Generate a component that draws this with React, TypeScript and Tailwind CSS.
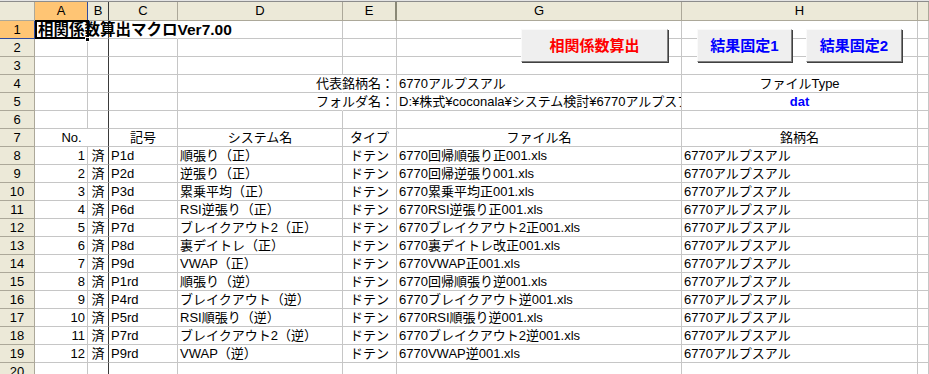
import React from 'react';

type Align = 'l' | 'c' | 'r';
type Edge = 'grid' | 'none' | 'freeze';

const alignCls: Record<Align, string> = {
  l: 'justify-start pl-[2px]',
  c: 'justify-center',
  r: 'justify-end pr-[2px]',
};

const edgeCls: Record<Edge, string> = {
  grid: 'border-r-[#c6c6c6]',
  none: 'border-r-transparent',
  freeze: 'border-r-[#3a3a3a]',
};

interface CellProps {
  children?: React.ReactNode;
  align?: Align;
  edge?: Edge;
  className?: string;
}

const Cell: React.FC<CellProps> = ({ children, align = 'l', edge = 'grid', className = '' }) => (
  <div
    className={`relative flex items-center whitespace-nowrap border-r border-b border-b-[#c6c6c6] text-[13px] leading-[17px] text-black ${alignCls[align]} ${edgeCls[edge]} ${className}`}
  >
    {children}
  </div>
);

const RowHead: React.FC<{ n: number; sel?: boolean }> = ({ n, sel }) => (
  <div
    className={
      sel
        ? 'flex items-center justify-center bg-[#ffc574] border-r border-b border-[#2f4ba0] text-[13px] leading-[17px]'
        : 'flex items-center justify-center bg-[#ece9d8] border-r border-b border-[#aca899] text-[13px] leading-[17px]'
    }
  >
    {n}
  </div>
);

const HeadCell: React.FC<{ label?: string; className?: string }> = ({ label, className = '' }) => (
  <div className={`flex items-center justify-center bg-[#ece9d8] border-r border-b border-[#aca899] text-[13px] ${className}`}>
    {label}
  </div>
);

// 空の行（A〜I）
const EmptyRow: React.FC<{ n: number }> = ({ n }) => (
  <>
    <RowHead n={n} />
    <Cell />
    <Cell edge="freeze" />
    <Cell />
    <Cell />
    <Cell />
    <Cell />
    <Cell />
    <Cell />
  </>
);

const DATA: [string, string, string, string][] = [
  ['1', 'P1d', '順張り（正）', '6770回帰順張り正001.xls'],
  ['2', 'P2d', '逆張り（正）', '6770回帰逆張り001.xls'],
  ['3', 'P3d', '累乗平均（正）', '6770累乗平均正001.xls'],
  ['4', 'P6d', 'RSI逆張り（正）', '6770RSI逆張り正001.xls'],
  ['5', 'P7d', 'ブレイクアウト2（正）', '6770ブレイクアウト2正001.xls'],
  ['6', 'P8d', '裏デイトレ（正）', '6770裏デイトレ改正001.xls'],
  ['7', 'P9d', 'VWAP（正）', '6770VWAP正001.xls'],
  ['8', 'P1rd', '順張り（逆）', '6770回帰順張り逆001.xls'],
  ['9', 'P4rd', 'ブレイクアウト（逆）', '6770ブレイクアウト逆001.xls'],
  ['10', 'P5rd', 'RSI順張り（逆）', '6770RSI順張り逆001.xls'],
  ['11', 'P7rd', 'ブレイクアウト2（逆）', '6770ブレイクアウト2逆001.xls'],
  ['12', 'P9rd', 'VWAP（逆）', '6770VWAP逆001.xls'],
];

const SheetButton: React.FC<{ label: string; className: string }> = ({ label, className }) => (
  <button
    className={`absolute flex items-center justify-center pt-[2px] bg-[#efefef] border border-t-[#fafafa] border-l-[#fafafa] border-r-[#808080] border-b-[#808080] shadow-[1px_1px_0_#404040] text-[15px] font-bold ${className}`}
  >
    {label}
  </button>
);

export default function App() {
  return (
    <div className="relative w-[929px] h-[374px] overflow-hidden bg-white font-['Liberation_Sans','Noto_Sans_CJK_JP',sans-serif]">
      <div className="h-[2px] border-t border-t-[#e4e4e4] bg-[#8c8c8c]" />
      <div className="grid grid-cols-[35px_53px_21px_69px_165px_54px_285px_236px_1fr] grid-rows-[19px_repeat(20,18px)]">
        {/* column headers */}
        <HeadCell />
        <div className="flex items-center justify-center bg-[#ffc574] border-r border-b border-[#2f4ba0] text-[13px]">A</div>
        <HeadCell label="B" className="border-r-[#3a3a3a]" />
        <HeadCell label="C" />
        <HeadCell label="D" />
        <HeadCell label="E" className="border-r-2 border-r-[#8a8876]" />
        <HeadCell label="G" />
        <HeadCell label="H" />
        <HeadCell />

        {/* row 1 */}
        <RowHead n={1} sel />
        <Cell edge="none" className="z-10 pl-[3px]">
          <span className="text-[15.5px] font-bold">相関係数算出マクロVer7.00</span>
          <div className="absolute left-0 top-[-1px] w-[54px] h-[19px] border-2 border-black pointer-events-none" />
          <div className="absolute left-[50px] top-[16px] w-[5px] h-[5px] bg-black border border-white" />
        </Cell>
        <Cell edge="freeze" />
        <Cell edge="none" />
        <Cell />
        <Cell />
        <Cell />
        <Cell />
        <Cell />

        <EmptyRow n={2} />
        <EmptyRow n={3} />

        {/* row 4 */}
        <RowHead n={4} />
        <Cell />
        <Cell edge="freeze" />
        <Cell />
        <Cell edge="none" />
        <Cell align="r">代表銘柄名：</Cell>
        <Cell>6770アルプスアル</Cell>
        <Cell align="c">ファイルType</Cell>
        <Cell />

        {/* row 5 */}
        <RowHead n={5} />
        <Cell />
        <Cell edge="freeze" />
        <Cell />
        <Cell edge="none" />
        <Cell align="r">フォルダ名：</Cell>
        <Cell className="overflow-hidden">D:¥株式¥coconala¥システム検討¥6770アルプスアル</Cell>
        <Cell align="c">
          <span className="font-bold text-[#0000ff]">dat</span>
        </Cell>
        <Cell />

        <EmptyRow n={6} />

        {/* row 7 */}
        <RowHead n={7} />
        <Cell align="c" edge="freeze" className="col-span-2">No.</Cell>
        <Cell align="c">記号</Cell>
        <Cell align="c">システム名</Cell>
        <Cell align="c">タイプ</Cell>
        <Cell align="c">ファイル名</Cell>
        <Cell align="c">銘柄名</Cell>
        <Cell />

        {DATA.map(([no, code, name, file], i) => (
          <React.Fragment key={no}>
            <RowHead n={i + 8} />
            <Cell align="r">{no}</Cell>
            <Cell align="c" edge="freeze">済</Cell>
            <Cell>{code}</Cell>
            <Cell>{name}</Cell>
            <Cell align="c">ドテン</Cell>
            <Cell>{file}</Cell>
            <Cell>6770アルプスアル</Cell>
            <Cell />
          </React.Fragment>
        ))}

        <EmptyRow n={20} />
      </div>

      {/* macro buttons on the sheet */}
      <SheetButton label="相関係数算出" className="left-[521px] top-[29px] w-[147px] h-[33px] text-[#ff0000]" />
      <SheetButton label="結果固定1" className="left-[697px] top-[29px] w-[95px] h-[33px] text-[#0000ff]" />
      <SheetButton label="結果固定2" className="left-[806px] top-[29px] w-[96px] h-[33px] text-[#0000ff]" />
    </div>
  );
}
